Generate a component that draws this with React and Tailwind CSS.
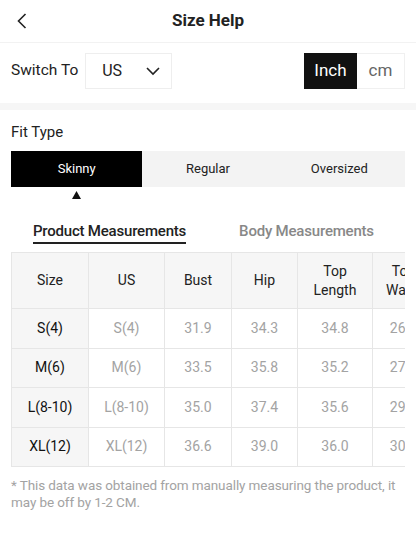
import React from "react";

const columns = [
  { key: "size", label: ["Size"], w: "w-[77px]" },
  { key: "us", label: ["US"], w: "w-[76px]" },
  { key: "bust", label: ["Bust"], w: "w-[67px]" },
  { key: "hip", label: ["Hip"], w: "w-[66px]" },
  { key: "top", label: ["Top", "Length"], w: "w-[75px]" },
  { key: "waist", label: ["Top", "Waist"], w: "w-[62px]" },
];

const rows = [
  ["S(4)", "S(4)", "31.9", "34.3", "34.8", "26.0"],
  ["M(6)", "M(6)", "33.5", "35.8", "35.2", "27.6"],
  ["L(8-10)", "L(8-10)", "35.0", "37.4", "35.6", "29.1"],
  ["XL(12)", "XL(12)", "36.6", "39.0", "36.0", "30.7"],
];

const App = () => {
  return (
    <div className="w-[416px] h-[537px] bg-white overflow-hidden font-['Roboto',sans-serif] text-[#222]">
      {/* header */}
      <div className="relative h-[43px] flex items-center justify-center border-b border-[#f2f2f2]">
        <svg className="absolute left-[15px] top-[12px]" width="14" height="18" viewBox="0 0 14 18" fill="none">
          <path d="M10.5 2 L3.5 9 L10.5 16" stroke="#222" strokeWidth="1.6" />
        </svg>
        <h1 className="text-[17px] font-bold">Size Help</h1>
      </div>

      {/* switch row */}
      <div className="flex items-center justify-between px-[11px] pt-[10px] pb-[14px]">
        <div className="flex items-center">
          <span className="text-[15.5px] mr-[7px]">Switch To</span>
          <div className="w-[87px] h-[36px] border border-[#eeeeee] flex items-center justify-between pl-[16px] pr-[10px]">
            <span className="text-[16px]">US</span>
            <svg width="16" height="10" viewBox="0 0 16 10" fill="none">
              <path d="M2 2 L8 8 L14 2" stroke="#222" strokeWidth="1.6" />
            </svg>
          </div>
        </div>
        <div className="flex h-[36px]">
          <div className="w-[53px] bg-[#111] text-white text-[17px] flex items-center justify-center">Inch</div>
          <div className="w-[48px] border border-l-0 border-[#f0f0f0] text-[#666] text-[17px] flex items-center justify-center">cm</div>
        </div>
      </div>

      <div className="h-[7px] bg-[#f6f6f6]" />

      {/* fit type */}
      <div className="px-[11px]">
        <div className="text-[15px] mt-[11px] h-[22px] leading-[22px]">Fit Type</div>
        <div className="grid grid-cols-3 mt-[8px] h-[36px] bg-[#f3f3f3] text-[13px]">
          <div className="bg-black text-white flex items-center justify-center">Skinny</div>
          <div className="flex items-center justify-center">Regular</div>
          <div className="flex items-center justify-center">Oversized</div>
        </div>
        <div className="grid grid-cols-3 h-[14px]">
          <div className="flex justify-center pt-[4px]">
            <svg width="9" height="8" viewBox="0 0 9 8">
              <path d="M4.5 0 L9 8 L0 8 Z" fill="#111" />
            </svg>
          </div>
        </div>

        {/* tabs */}
        <div className="grid grid-cols-2 mt-[20px] text-[15px] leading-[20px]">
          <div className="flex justify-center">
            <span className="pb-[1px] border-b-2 border-[#222] font-medium tracking-[-0.2px]">Product Measurements</span>
          </div>
          <div className="flex justify-center">
            <span className="pb-[1px] text-[#888] font-medium tracking-[-0.2px]">Body Measurements</span>
          </div>
        </div>

        <div className="mt-[8px] overflow-hidden">
          <table className="border-collapse text-[14px] table-fixed w-max">
            <thead>
              <tr className="bg-[#f6f6f6] h-[56px]">
                {columns.map((c) => (
                  <th key={c.key} className={`${c.w} border border-[#e6e6e6] font-normal leading-[19px] text-center align-middle`}>
                    {c.label.map((l) => (
                      <div key={l}>{l}</div>
                    ))}
                  </th>
                ))}
              </tr>
            </thead>
            <tbody>
              {rows.map((r) => (
                <tr key={r[0]} className="h-[39.5px]">
                  {r.map((v, i) => (
                    <td
                      key={i}
                      className={
                        i === 0
                          ? "border border-[#e6e6e6] bg-[#f6f6f6] text-center text-[#111]"
                          : "border border-[#e6e6e6] text-center text-[#a3a3a3]"
                      }
                    >
                      {v}
                    </td>
                  ))}
                </tr>
              ))}
            </tbody>
          </table>
        </div>

        <p className="mt-[10px] text-[13.5px] leading-[17px] text-[#a3a3a3] tracking-[-0.1px]">
          * This data was obtained from manually measuring the product, it may be off by 1-2 CM.
        </p>
      </div>
    </div>
  );
};

export default App;
